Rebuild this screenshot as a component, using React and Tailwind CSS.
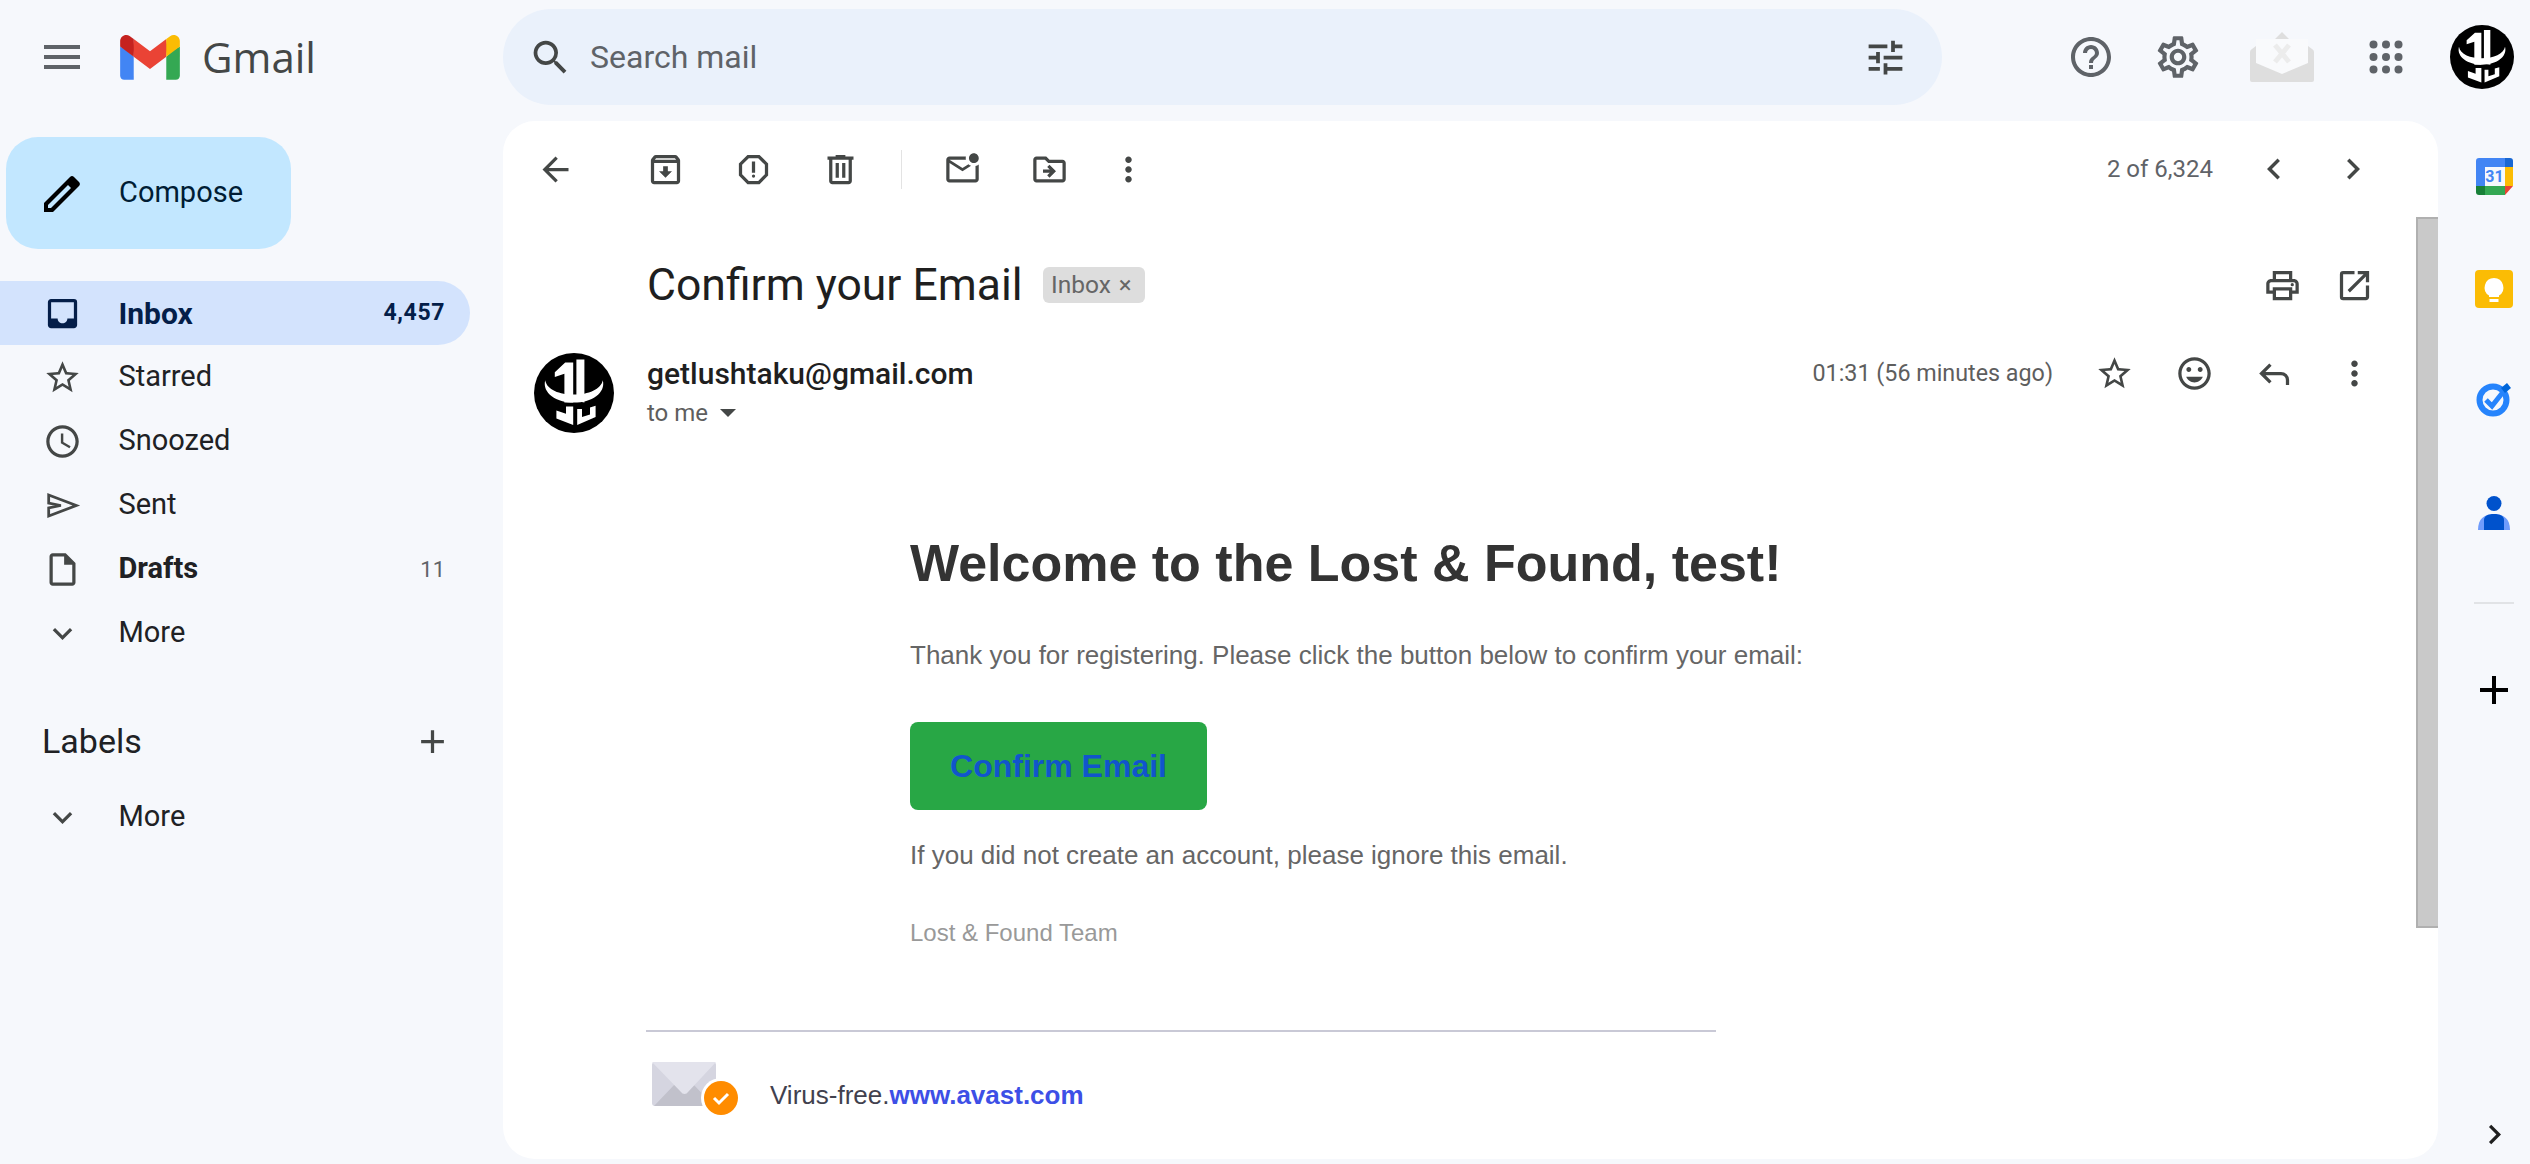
import {
  MdMenu, MdSearch, MdTune, MdHelpOutline, MdOutlineSettings, MdInbox, MdStarBorder, MdAccessTime,
  MdOutlineInsertDriveFile, MdExpandMore, MdAdd, MdArrowBack, MdOutlineArchive, MdOutlineReport,
  MdOutlineMarkEmailUnread, MdOutlineDriveFileMove, MdMoreVert, MdChevronLeft, MdChevronRight, MdOutlinePrint,
  MdOpenInNew, MdOutlineInsertEmoticon,
} from 'react-icons/md'

function SentIcon({ className }) {
  return (
    <svg className={className} width="1em" height="1em" viewBox="0 0 24 24" fill="none" stroke="currentColor" strokeWidth="1.700">
      <path d="M3.500 5.500 20.500 12 3.500 18.500v-5L11 12 3.500 10.500z" />
    </svg>
  )
}

const navItems = [
  { label: 'Starred', icon: MdStarBorder },
  { label: 'Snoozed', icon: MdAccessTime },
  { label: 'Sent', icon: SentIcon },
  { label: 'Drafts', icon: MdOutlineInsertDriveFile, count: '11', bold: true },
  { label: 'More', icon: MdExpandMore },
]

function GmailLogo() {
  return (
    <svg className="w-[60px] h-[45px]" viewBox="0 0 256 193">
      <path fill="#4285F4" d="M58.182 192.05V93.14L27.507 65.077 0 49.504v125.091c0 9.658 7.825 17.455 17.455 17.455h40.727Z" />
      <path fill="#34A853" d="M197.818 192.05h40.727c9.659 0 17.455-7.826 17.455-17.455V49.505l-31.156 17.837-27.026 25.798v98.91Z" />
      <path fill="#EA4335" d="m58.182 93.14-4.174-38.647 4.174-36.989L128 69.868l69.818-52.364 4.669 34.992-4.669 40.644L128 145.504z" />
      <path fill="#FBBC04" d="M197.818 17.504V93.14L256 49.504V26.231c0-21.585-24.64-33.89-41.89-20.945l-16.292 12.218Z" />
      <path fill="#C5221F" d="M0 49.504l26.759 20.07L58.182 93.14V17.504L41.89 5.286C24.61-7.66 0 4.646 0 26.23v23.273Z" />
    </svg>
  )
}

function Avatar({ className }) {
  return (
    <svg className={className} viewBox="0 0 100 100">
      <circle cx="50" cy="50" r="50" fill="#000" />
      <path fill="#fff" d="M26 24 39 12h10v50H38V26l-12 4zM53 8h10v54l-10-2z" />
      <path fill="#fff" d="M14 34c-4 16 14 28 36 28s40-12 36-28c-2 11-18 18-36 18S16 46 14 34z" />
      <path fill="#fff" d="M40 67h9v23l-21-8V72l12 4zM54 70h6v10l10-3v-9l7-2v14l-23 10z" />
    </svg>
  )
}

function AppsDots() {
  return (
    <svg className="w-[36px] h-[36px] fill-[#5f6368]" viewBox="0 0 36 36">
      {[5.500, 18, 30.500].map((y) =>
        [5.500, 18, 30.500].map((x) => <circle key={`${x}-${y}`} cx={x} cy={y} r="4" />)
      )}
    </svg>
  )
}

function TrackerEnvelope() {
  return (
    <svg className="w-[64px] h-[50px]" viewBox="0 0 64 50">
      <path fill="#dedede" d="M0 20q0-2 2-3l4-3 0-7 19 0 7-7 7 7 19 0 0 7 4 3q2 1 2 3v28a2 2 0 0 1-2 2H2a2 2 0 0 1-2-2z" />
      <path fill="#f9fafc" d="M6 7h52v24L32 42 6 31z" />
      <path stroke="#ececec" strokeWidth="5" d="M25 13l14 17M39 13 25 30" />
    </svg>
  )
}

function PencilIcon() {
  return (
    <svg className="w-[36px] h-[37px]" viewBox="0 0 36 37">
      <path fill="#000" d="M0 37V28L26 2a3 3 0 0 1 4 0l5 5a3 3 0 0 1 0 4L9 37z" />
      <path fill="#c2e7ff" d="M4 33v-3L24 10l3 3L7 33z" />
    </svg>
  )
}

// material symbols "delete" has the two inner bars the md set leaves out
function TrashIcon() {
  return (
    <svg width="1em" height="1em" viewBox="0 0 24 24" fill="currentColor">
      <path d="M7 21q-.825 0-1.412-.587Q5 19.825 5 19V6H4V4h5V3h6v1h5v2h-1v13q0 .825-.587 1.413Q17.825 21 17 21ZM17 6H7v13h10ZM9 17h2V8H9Zm4 0h2V8h-2Z" />
    </svg>
  )
}

function ReplyIcon() {
  return (
    <svg width="1em" height="1em" viewBox="0 0 24 24" fill="none" stroke="currentColor" strokeWidth="2">
      <path d="M9.500 6.500 4 12l5.500 5.500M4.500 12H16a4 4 0 0 1 4 4v3" />
    </svg>
  )
}

function CalendarIcon() {
  return (
    <svg className="w-[37px] h-[37px]" viewBox="0 0 37 37">
      <path fill="#4285f4" d="M3 0h26v9H9v19H0V3a3 3 0 0 1 3-3z" />
      <path fill="#1967d2" d="M29 0h5a3 3 0 0 1 3 3v6h-8z" />
      <path fill="#fbbc04" d="M29 9h8v19h-8z" />
      <path fill="#34a853" d="M9 28h20v9H9z" />
      <path fill="#188038" d="M0 28h9v9H3a3 3 0 0 1-3-3z" />
      <path fill="#ea4335" d="M29 28h8l-8 9z" />
      <text x="18.500" y="24" textAnchor="middle" fill="#4285f4" fontSize="16" fontWeight="700" fontFamily="Roboto, sans-serif">31</text>
    </svg>
  )
}

function KeepIcon() {
  return (
    <svg className="w-[38px] h-[38px]" viewBox="0 0 38 38">
      <rect width="38" height="38" rx="4" fill="#fbbc04" />
      <path fill="#fff" d="M19 8a9.500 9.500 0 0 0-5 17.500V27h10v-1.500A9.500 9.500 0 0 0 19 8zM14.500 29h9v3h-9z" />
    </svg>
  )
}

function TasksIcon() {
  return (
    <svg className="w-[36px] h-[36px]" viewBox="0 0 36 36">
      <circle cx="17" cy="19" r="13.500" fill="none" stroke="#2684fc" strokeWidth="6" />
      <path d="M10 19l6 6L31 6" fill="none" stroke="#2684fc" strokeWidth="5" />
      <path d="M25 7l6-5 4 5-6 5z" fill="#0066da" />
    </svg>
  )
}

function ContactsIcon() {
  return (
    <svg className="w-[32px] h-[34px]" viewBox="0 0 32 34">
      <circle cx="16" cy="7.500" r="7.500" fill="#0052cc" />
      <path fill="#6f9cfc" d="M0 34c0-11 6-16 16-16s16 5 16 16z" />
      <path fill="#0052cc" d="M6 34V24c0-4 4-6 10-6s10 2 10 6v10z" />
    </svg>
  )
}

function AvastMail() {
  return (
    <svg className="w-[90px] h-[56px]" viewBox="0 0 90 56">
      <rect width="64" height="44" rx="3" fill="#d5d5e0" />
      <path fill="#c1c1cb" d="M2 44 23 22l9 7 9-7 21 22z" />
      <path fill="#e3e3ec" d="M0 0h64L36 30a4 4 0 0 1-7 0z" />
      <circle cx="69" cy="36" r="20" fill="#fff" />
      <circle cx="69" cy="36" r="17" fill="#ff8c00" />
      <path d="M62 36l5 5 9-9" fill="none" stroke="#fff" strokeWidth="3" />
    </svg>
  )
}

function ToolBtn({ icon: Icon, w = 'w-[87.500px]', size = 'text-[39px]' }) {
  return (
    <div className={`${w} flex items-center justify-center shrink-0 text-[#444746] ${size}`}>
      <Icon />
    </div>
  )
}

function NavRow({ label, icon: Icon, count, bold }) {
  return (
    <div className="h-[64px] flex items-center pl-[43px] pr-[25px] text-[#202124]">
      <Icon className="text-[39px] text-[#444746] shrink-0" />
      <span className={`ml-[36.500px] text-[29px] flex-1 ${bold ? 'font-bold' : ''}`}>{label}</span>
      {count && <span className="text-[22px] text-[#5f6368]">{count}</span>}
    </div>
  )
}

export default function App() {
  return (
    <div className="w-[2530px] h-[1164px] overflow-hidden flex flex-col bg-[#f6f8fc] font-['Roboto',sans-serif]">
      <header className="h-[121px] pb-[7px] shrink-0 flex items-center">
        <div className="w-[503px] flex items-center pl-[38px]">
          <MdMenu className="text-[48px] text-[#5f6368]" />
          <div className="ml-[34px]"><GmailLogo /></div>
          <span className="ml-[22px] text-[42px] leading-none text-[#444746] font-['Open_Sans',sans-serif]">Gmail</span>
        </div>
        <div className="w-[1439px] h-[96px] rounded-[48px] bg-[#eaf1fb] flex items-center pl-[25px] pr-[34px]">
          <MdSearch className="text-[45px] text-[#444746]" />
          <span className="ml-[17px] flex-1 text-[32px] text-[#5f6368]">Search mail</span>
          <MdTune className="text-[45px] text-[#444746]" />
        </div>
        <div className="ml-[125px] text-[48px] text-[#5f6368]"><MdHelpOutline /></div>
        <div className="ml-[38px] text-[50px] text-[#5f6368]"><MdOutlineSettings /></div>
        <div className="ml-[47px]"><TrackerEnvelope /></div>
        <div className="ml-[54px]"><AppsDots /></div>
        <Avatar className="ml-[46px] w-[64px] h-[64px]" />
      </header>

      <div className="flex-1 flex min-h-0">
        <aside className="w-[503px] shrink-0 pt-[16px]">
          <div className="ml-[6px] w-[285px] h-[112px] rounded-[32px] bg-[#c2e7ff] flex items-center pl-[38px]">
            <PencilIcon />
            <span className="ml-[39px] text-[29px] text-[#001d35]">Compose</span>
          </div>
          <div className="mt-[32px] w-[470px] h-[64px] rounded-r-full bg-[#d3e3fd] flex items-center pl-[43px] pr-[25px] text-[#041e49] font-bold">
            <MdInbox className="text-[39px] shrink-0" />
            <span className="ml-[36.500px] text-[30px] flex-1">Inbox</span>
            <span className="text-[23px] tracking-[0.6px]">4,457</span>
          </div>
          <div className="w-[470px]">
            {navItems.map((item) => <NavRow key={item.label} {...item} />)}
          </div>
          <div className="w-[470px] mt-[44px] h-[64px] flex items-center justify-between pl-[42px] pr-[18px]">
            <span className="text-[34px] text-[#202124]">Labels</span>
            <MdAdd className="text-[39px] text-[#444746]" />
          </div>
          <div className="w-[470px] mt-[12px]">
            <NavRow label="More" icon={MdExpandMore} />
          </div>
        </aside>

        <main className="relative w-[1935px] shrink-0 mb-[5px] bg-white rounded-[32px] overflow-hidden">
          <div className="h-[96px] flex items-center pl-[23px] pr-[46px]">
            <ToolBtn icon={MdArrowBack} w="w-[58px]" />
            <div className="ml-[38px] flex">
              <ToolBtn icon={MdOutlineArchive} />
              <ToolBtn icon={MdOutlineReport} />
              <ToolBtn icon={TrashIcon} />
            </div>
            <div className="ml-[16px] w-px h-[39px] bg-[#e3e3e3]" />
            <div className="ml-[17px] flex">
              <ToolBtn icon={MdOutlineMarkEmailUnread} />
              <ToolBtn icon={MdOutlineDriveFileMove} />
              <ToolBtn icon={MdMoreVert} w="w-[70px]" />
            </div>
            <span className="ml-auto mr-[21px] text-[24px] text-[#5f6368]">2 of 6,324</span>
            <ToolBtn icon={MdChevronLeft} w="w-[79px]" size="text-[42px]" />
            <ToolBtn icon={MdChevronRight} w="w-[79px]" size="text-[42px]" />
          </div>

          <div className="h-[136px] flex items-center pl-[144px] pr-[48px]">
            <h2 className="w-[375px] shrink-0 whitespace-nowrap text-[44.500px] font-normal text-[#1f1f1f]">Confirm your Email</h2>
            <div className="ml-[21px] w-[102px] h-[36px] rounded-[6px] bg-[#dddddd] flex items-center pl-[8px] gap-[8px] text-[#666666] text-[24.500px]">
              Inbox <span className="text-[24px] leading-none">×</span>
            </div>
            <div className="ml-auto flex">
              <ToolBtn icon={MdOutlinePrint} w="w-[72px]" />
              <ToolBtn icon={MdOpenInNew} w="w-[72px]" />
            </div>
          </div>

          <div className="h-[80px] flex pl-[31px] pr-[44px]">
            <Avatar className="w-[80px] h-[80px] shrink-0" />
            <div className="ml-[33px] flex-1">
              <div className="h-[40px] flex items-center text-[30px] font-medium text-[#1f1f1f]">getlushtaku@gmail.com</div>
              <div className="h-[40px] flex items-center text-[24px] text-[#5e5e5e]">
                to me
                <span className="ml-[12px] w-0 h-0 border-x-[8px] border-x-transparent border-t-[8px] border-t-[#444746]" />
              </div>
            </div>
            <div className="h-[40px] flex items-center">
              <span className="mr-[21px] text-[23.300px] text-[#5e5e5e]">01:31 (56 minutes ago)</span>
              <ToolBtn icon={MdStarBorder} w="w-[80px]" />
              <ToolBtn icon={MdOutlineInsertEmoticon} w="w-[80px]" />
              <ToolBtn icon={ReplyIcon} w="w-[80px]" />
              <ToolBtn icon={MdMoreVert} w="w-[80px]" />
            </div>
          </div>

          <div className="ml-[407px] pt-[100px] font-['Liberation_Sans',Arial,sans-serif]">
            <h1 className="h-[60px] leading-[60px] text-[52px] font-bold text-[#333333]">Welcome to the Lost &amp; Found, test!</h1>
            <p className="mt-[47px] h-[30px] leading-[30px] text-[26px] text-[#666666]">Thank you for registering. Please click the button below to confirm your email:</p>
            <div className="mt-[52px] w-[297px] h-[88px] rounded-[8px] bg-[#28a745] flex items-center justify-center text-[32px] font-bold text-[#1155cc]">Confirm Email</div>
            <p className="mt-[30px] h-[30px] leading-[30px] text-[26px] text-[#666666]">If you did not create an account, please ignore this email.</p>
            <p className="mt-[49px] h-[28px] leading-[28px] text-[24px] text-[#999999]">Lost &amp; Found Team</p>
          </div>

          <div className="ml-[143px] mt-[83px] w-[1070px] pt-[30px] border-t-2 border-[#c9c9d6] flex font-['Liberation_Sans',Arial,sans-serif]">
            <div className="ml-[6px]"><AvastMail /></div>
            <div className="ml-[28px] mt-[19px] text-[26px] leading-[28px] text-[#41414e]">
              Virus-free.<span className="font-bold text-[#3d4fe6]">www.avast.com</span>
            </div>
          </div>

          <div className="absolute right-0 top-[96px] w-[22px] h-[711px] bg-[#c9c9c9] border-l-2 border-y-2 border-[#b0b0b0]" />
        </main>

        <aside className="flex-1 flex flex-col items-center relative pl-[20px]">
          <div className="mt-[37px]"><CalendarIcon /></div>
          <div className="mt-[75px]"><KeepIcon /></div>
          <div className="mt-[73px]"><TasksIcon /></div>
          <div className="mt-[79px]"><ContactsIcon /></div>
          <div className="mt-[72px] w-[40px] h-[2px] bg-[#e1e3e6]" />
          <MdAdd className="mt-[62px] text-[48px] text-black" />
          <MdChevronRight className="absolute bottom-[10px] text-[39px] text-[#1f1f1f]" />
        </aside>
      </div>
    </div>
  )
}
